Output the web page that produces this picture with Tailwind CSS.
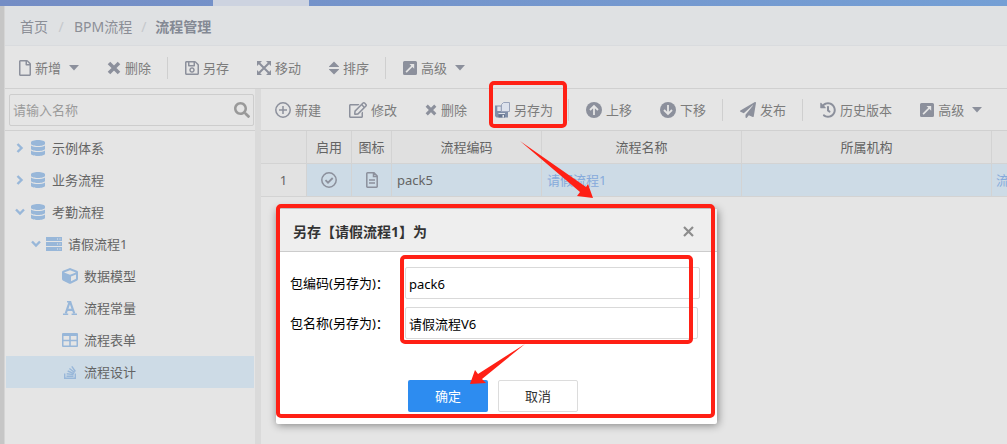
<!DOCTYPE html>
<html lang="zh-CN">
<head>
<meta charset="utf-8">
<title>流程管理</title>
<script src="https://cdn.jsdelivr.net/npm/@tailwindcss/browser@4"></script>
</head>
<body class="relative flex min-h-screen flex-col overflow-hidden bg-[#e5e5e5] font-['Noto_Sans','Noto_Sans_CJK_SC',sans-serif] text-[13px] leading-5 text-[#7c7c7c]">

<svg class="hidden" aria-hidden="true">
  <symbol id="times" viewBox="0 0 14 14"><path d="M2 2l10 10M12 2L2 12" stroke="currentColor" stroke-width="3.600" fill="none"/></symbol>
  <symbol id="advanced" viewBox="0 0 14 14"><path fill-rule="evenodd" fill="currentColor" d="M1.500 0h11A1.500 1.500 0 0 1 14 1.500v11a1.500 1.500 0 0 1-1.500 1.500h-11A1.500 1.500 0 0 1 0 12.500v-11A1.500 1.500 0 0 1 1.500 0zM6.500 3l1.800 1.800-5.800 5.700 1.200 1.200 5.700-5.800L11.200 7.700V3z"/></symbol>
  <symbol id="caret" viewBox="0 0 10 6"><path d="M0 0h10L5 5.500z" fill="currentColor"/></symbol>
  <symbol id="database" viewBox="0 0 448 512"><path fill="currentColor" d="M448 73.143v45.714C448 159.143 347.667 192 224 192S0 159.143 0 118.857V73.143C0 32.857 100.333 0 224 0s224 32.857 224 73.143zM448 176v102.857C448 319.143 347.667 352 224 352S0 319.143 0 278.857V176c48.125 33.143 136.208 48.572 224 48.572S399.874 209.143 448 176zm0 160v102.857C448 479.143 347.667 512 224 512S0 479.143 0 438.857V336c48.125 33.143 136.208 48.572 224 48.572S399.874 369.143 448 336z"/></symbol>
  <symbol id="right" viewBox="0 0 8 10"><path d="M1.500 1L5.500 5l-4 4" stroke="currentColor" stroke-width="2.400" fill="none"/></symbol>
  <symbol id="down" viewBox="0 0 10 8"><path d="M1 1.500L5 5.500l4-4" stroke="currentColor" stroke-width="2.400" fill="none"/></symbol>
</svg>

<div class="flex h-[6px] shrink-0 bg-linear-to-r from-[#748dc5] to-[#749fd5]"><div class="ml-[213px] w-24 bg-[#cdd3e0]"></div></div>

<div class="flex grow border-l-4 border-[#c6c6c6]">
<div class="flex min-w-0 grow flex-col border-l border-[#d5d5d5]">

<nav class="flex h-10 shrink-0 items-center border-b border-[#d9dbde] bg-[#dfe1e3] pt-[2px] pl-[15px] text-sm text-[#8b8e96]" aria-label="导航">
  <a href="#">首页</a><span class="w-[26px] text-center text-[#c5c8cc]">/</span><a href="#">BPM流程</a><span class="w-[23px] text-center text-[#c5c8cc]">/</span><a href="#" class="font-bold text-[#848994]">流程管理</a>
</nav>

<div class="flex h-[43px] shrink-0 items-center border-b border-[#d0d0d0] pt-px [&_svg]:shrink-0 [&_svg]:text-[#8c909c] [&_button]:flex [&_button]:items-center [&_button]:gap-1 [&_button]:px-[14px] [&_button]:whitespace-nowrap">
  <button type="button"><svg class="h-4 w-3" viewBox="0 0 384 512"><path fill="currentColor" d="M369.900 97.900L286 14C277 5 264.800-.1 252.100-.1H48C21.500 0 0 21.500 0 48v416c0 26.500 21.500 48 48 48h288c26.500 0 48-21.500 48-48V131.900c0-12.700-5.100-25-14.100-34zM332.100 128H256V51.900l76.100 76.100zM48 464V48h160v104c0 13.300 10.700 24 24 24h104v288H48z"/></svg>新增<svg class="ml-1 h-[6px] w-[10px]"><use href="#caret"/></svg></button>
  <button type="button"><svg class="size-[14px]"><use href="#times"/></svg>删除</button>
  <i class="mr-[3px] ml-[2px] h-[22px] w-px bg-[#cfcfcf]"></i>
  <button type="button"><svg class="h-4 w-[14px]" viewBox="0 0 448 512"><path fill="currentColor" d="M433.941 129.941l-83.882-83.882A48 48 0 0 0 316.118 32H48C21.490 32 0 53.490 0 80v352c0 26.510 21.490 48 48 48h352c26.510 0 48-21.490 48-48V163.882a48 48 0 0 0-14.059-33.941zM272 80v80H144V80h128zm122 352H54a6 6 0 0 1-6-6V86a6 6 0 0 1 6-6h42v104c0 13.255 10.745 24 24 24h176c13.255 0 24-10.745 24-24V83.882l78.243 78.243a6 6 0 0 1 1.757 4.243V426a6 6 0 0 1-6 6zM224 232c-48.523 0-88 39.477-88 88s39.477 88 88 88 88-39.477 88-88-39.477-88-88-88zm0 128c-22.056 0-40-17.944-40-40s17.944-40 40-40 40 17.944 40 40-17.944 40-40 40z"/></svg>另存</button>
  <button type="button"><svg class="size-[14px]" viewBox="0 0 14 14"><path d="M2 2l10 10M12 2L2 12" stroke="currentColor" stroke-width="2"/><path fill="currentColor" d="M0 0h5L0 5zM14 0v5L9 0zM0 14V9l5 5zM14 14H9l5-5z"/></svg>移动</button>
  <button type="button"><svg class="h-[14px] w-[10px]" viewBox="0 0 10 14"><path fill="currentColor" d="M0 5.500L5 .5l5 5V6H0zM0 8h10v.5l-5 5-5-5z"/></svg>排序</button>
  <i class="mr-[3px] ml-[2px] h-[22px] w-px bg-[#cfcfcf]"></i>
  <button type="button"><svg class="size-[14px]"><use href="#advanced"/></svg>高级<svg class="ml-1 h-[6px] w-[10px]"><use href="#caret"/></svg></button>
</div>

<div class="flex min-h-0 grow">
<aside class="flex w-[250px] shrink-0 flex-col">
  <div class="border-b border-[#d0d0d0] pt-[5px] pr-px pb-[4px] pl-1">
    <div class="flex h-8 items-center rounded-xs border border-[#cdcdcd] pr-[3px] pl-[3px]">
      <input type="search" aria-label="请输入名称" placeholder="请输入名称" class="min-w-0 grow bg-transparent outline-none placeholder:text-[#9b9b9b]">
      <button type="button" aria-label="搜索"><svg class="size-4 text-[#999]" viewBox="0 0 512 512"><path fill="currentColor" d="M505 442.700L405.300 343c-4.500-4.500-10.600-7-17-7H372c27.600-35.300 44-79.700 44-128C416 93.100 322.900 0 208 0S0 93.100 0 208s93.100 208 208 208c48.300 0 92.700-16.400 128-44v16.300c0 6.400 2.500 12.500 7 17l99.700 99.700c9.400 9.400 24.600 9.400 33.900 0l28.300-28.300c9.400-9.400 9.400-24.600.1-34zM208 336c-70.700 0-128-57.200-128-128 0-70.700 57.200-128 128-128 70.700 0 128 57.200 128 128 0 70.700-57.200 128-128 128z"/></svg></button>
    </div>
  </div>
  <ul class="pt-px pr-px pl-px text-[#646464] [&_svg]:shrink-0 [&_svg]:text-[#98b7d9] [&>li]:flex [&>li]:h-8 [&>li]:items-center">
    <li class="pl-[10px]"><svg class="mr-[7px] h-[10px] w-2"><use href="#right"/></svg><svg class="mr-[7px] h-4 w-[14px]"><use href="#database"/></svg>示例体系</li>
    <li class="pl-[10px]"><svg class="mr-[7px] h-[10px] w-2"><use href="#right"/></svg><svg class="mr-[7px] h-4 w-[14px]"><use href="#database"/></svg>业务流程</li>
    <li class="pl-[9px]"><svg class="mr-[6px] h-2 w-[10px]"><use href="#down"/></svg><svg class="mr-[7px] h-4 w-[14px]"><use href="#database"/></svg>考勤流程</li>
    <li class="pl-[25px]"><svg class="mr-[5px] h-2 w-[10px]"><use href="#down"/></svg><svg class="mr-[6px] h-[14px] w-4" viewBox="0 0 16 14"><path fill="currentColor" fill-rule="evenodd" d="M0 0h16v4H0zM0 5h16v4H0zM0 10h16v4H0zM11 1.500h1v1h-1zM13.500 1.500h1v1h-1zM11 6.500h1v1h-1zM13.500 6.500h1v1h-1zM11 11.500h1v1h-1zM13.500 11.500h1v1h-1z"/></svg>请假流程1</li>
    <li class="pl-14"><svg class="mr-[6px] size-4" viewBox="0 0 512 512"><path fill="currentColor" d="M239.100 6.300l-208 78c-18.700 7-31.100 25-31.100 45v225.100c0 18.200 10.300 34.800 26.500 42.900l208 104c13.500 6.800 29.400 6.800 42.900 0l208-104c16.300-8.100 26.500-24.800 26.500-42.900V129.300c0-20-12.400-37.900-31.100-44.900l-208-78C262 2.200 250 2.200 239.100 6.300zM256 68.400l192 72v1.100l-192 78-192-78v-1.100l192-72zm32 356V275.500l160-65v133.900l-160 80z"/></svg>数据模型</li>
    <li class="pl-14"><svg class="mr-[6px] size-4" viewBox="0 0 16 16"><path d="M3.700 13.500L7.600 2M8.200 2l4.100 11.500M5 9.800h6" stroke="currentColor" stroke-width="2.200" fill="none"/><path d="M1 14.200h5.200M9.600 14.200H15M5 1.700h4.200" stroke="currentColor" stroke-width="1.600"/></svg>流程常量</li>
    <li class="pl-14"><svg class="mr-[6px] size-4" viewBox="0 0 16 16"><path fill="currentColor" fill-rule="evenodd" d="M1 1h14a1 1 0 0 1 1 1v12a1 1 0 0 1-1 1H1a1 1 0 0 1-1-1V2a1 1 0 0 1 1-1zM1.500 4v3.800h5.700V4zM8.800 4v3.800h5.700V4zM1.500 9.300v4.200h5.700V9.300zM8.800 9.300v4.200h5.700V9.300z"/></svg>流程表单</li>
    <li class="bg-[#cddbe6] pl-14"><svg class="mr-[6px] size-4" viewBox="0 0 16 16"><g stroke="currentColor" fill="none" stroke-width="1.400"><path d="M2.700 9.500v4.800h10.600V9.500"/><path d="M4.500 12.200h7M4.700 9.700l6.900.9M5.700 7l6.300 2.600M7.400 4.500l5.200 4M9.800 2.300l3.600 5.200"/></g></svg>流程设计</li>
  </ul>
</aside>
<div class="w-[6px] shrink-0 bg-[#dadada]"></div>

<main class="min-w-0 grow overflow-hidden">
  <div class="flex h-[42px] items-center border-b border-[#d0d0d0] [&_svg]:shrink-0 [&_svg]:text-[#8c909c] [&_button]:flex [&_button]:items-center [&_button]:gap-1 [&_button]:px-[14px] [&_button]:whitespace-nowrap">
    <button type="button"><svg class="size-4" viewBox="0 0 16 16"><circle cx="8" cy="8" r="7.200" fill="none" stroke="currentColor" stroke-width="1.500"/><path d="M8 4v8M4 8h8" stroke="currentColor" stroke-width="1.500"/></svg>新建</button>
    <button type="button"><svg class="h-4 w-[18px]" viewBox="0 0 576 512"><path fill="currentColor" d="M402.300 344.900l32-32c5-5 13.700-1.500 13.700 5.700V464c0 26.500-21.500 48-48 48H48c-26.500 0-48-21.500-48-48V112c0-26.500 21.500-48 48-48h273.500c7.100 0 10.700 8.600 5.700 13.700l-32 32c-1.500 1.500-3.500 2.300-5.700 2.300H48v352h352V350.500c0-2.100.8-4.100 2.300-5.600zm156.600-201.800L296.300 405.700l-90.400 10c-26.200 2.900-48.500-19.200-45.600-45.600l10-90.400L432.900 17.100c22.900-22.900 59.900-22.900 82.700 0l43.200 43.200c22.900 22.900 22.900 60 .1 82.800zM460.100 174L402 115.900 216.200 301.800l-7.300 65.300 65.300-7.300L460.100 174zm64.800-79.700l-43.200-43.200c-4.100-4.100-10.800-4.100-14.800 0L436 82l58.100 58.100 30.900-30.900c4-4.200 4-10.800-.1-14.900z"/></svg>修改</button>
    <button type="button"><svg class="size-3"><use href="#times"/></svg>删除</button>
    <button type="button"><svg class="h-4 w-[15px]" viewBox="0 0 15 16"><path fill="#7f8ea8" d="M0 3.500h13V15.500H1.500L0 14z"/><path fill="#dfe3ea" d="M2.300 4.500h3.500v4.500H2.300zM3.500 11h6.500v1H3.500z"/><path fill="#66758f" d="M3.500 12.500h6.500v3H3.500z"/><path fill="#dfe3ea" d="M7.500 13h1.500v2.500H7.500z"/><path fill="#dde2ec" stroke="#9aa4ba" d="M6.500 2.500l2-2h6v9h-8z"/></svg>另存为</button>
    <i class="mr-[3px] ml-px h-[22px] w-px bg-[#cfcfcf]"></i>
    <button type="button"><svg class="size-4" viewBox="0 0 16 16"><circle cx="8" cy="8" r="8" fill="currentColor"/><path d="M8 13V4M4 8l4-4 4 4" fill="none" stroke="#e5e5e5" stroke-width="1.800"/></svg>上移</button>
    <button type="button"><svg class="size-4" viewBox="0 0 16 16"><circle cx="8" cy="8" r="8" fill="currentColor"/><path d="M8 3v9M4 8l4 4 4-4" fill="none" stroke="#e5e5e5" stroke-width="1.800"/></svg>下移</button>
    <i class="mr-[3px] ml-[2px] h-[22px] w-px bg-[#cfcfcf]"></i>
    <button type="button"><svg class="size-4" viewBox="0 0 512 512"><path fill="currentColor" d="M476 3.200L12.500 270.600c-18.100 10.400-15.800 35.600 2.200 43.200L121 358.400l287.300-253.200c5.500-4.900 13.300 2.600 8.600 8.300L176 407v80.500c0 23.600 28.500 32.900 42.500 15.800L282 426l124.600 52.200c14.200 6 30.400-2.900 33-18.200l72-432C515 7.800 493.300-6.800 476 3.200z"/></svg>发布</button>
    <i class="mr-[3px] ml-[2px] h-[22px] w-px bg-[#cfcfcf]"></i>
    <button type="button"><svg class="size-4" viewBox="0 0 512 512"><path fill="currentColor" d="M504 255.531c.253 136.640-111.180 248.372-247.820 248.468-59.015.042-113.223-20.530-155.822-54.911-11.077-8.940-11.905-25.541-1.839-35.607l11.267-11.267c8.609-8.609 22.353-9.551 31.891-1.984C173.062 425.135 212.781 440 256 440c101.705 0 184-82.311 184-184 0-101.705-82.311-184-184-184-48.814 0-93.149 18.969-126.068 49.932l50.754 50.754c10.080 10.080 2.941 27.314-11.313 27.314H24c-8.837 0-16-7.163-16-16V38.627c0-14.254 17.234-21.393 27.314-11.314l49.372 49.372C129.209 34.136 189.552 8 256 8c136.810 0 247.747 110.780 248 247.531zm-180.912 78.784l9.823-12.630c8.138-10.463 6.253-25.542-4.210-33.679L288 256.349V152c0-13.255-10.745-24-24-24h-16c-13.255 0-24 10.745-24 24v135.651l65.409 50.874c10.463 8.137 25.541 6.253 33.679-4.210z"/></svg>历史版本</button>
    <button type="button"><svg class="size-[14px]"><use href="#advanced"/></svg>高级<svg class="ml-1 h-[6px] w-[10px]"><use href="#caret"/></svg></button>
  </div>
  <table class="w-[880px] table-fixed border-separate border-spacing-0 text-[#646464] [&_td]:h-[33px] [&_td]:border-r [&_td]:border-b [&_td]:border-[#d3d3d3] [&_td]:p-0 [&_th]:h-[33px] [&_th]:border-r [&_th]:border-b [&_th]:border-[#d3d3d3] [&_th]:bg-[#e0e0e0] [&_th]:p-0 [&_th]:font-normal">
    <colgroup><col class="w-[46px]"><col class="w-[45px]"><col class="w-10"><col class="w-[150px]"><col class="w-[200px]"><col class="w-[250px]"><col></colgroup>
    <thead><tr><th></th><th>启用</th><th>图标</th><th>流程编码</th><th>流程名称</th><th>所属机构</th><th></th></tr></thead>
    <tbody><tr class="bg-[#cddbe6]">
      <td class="bg-[#e2e2e2] text-center">1</td>
      <td><svg class="mx-auto size-4 text-[#8c909c]" viewBox="0 0 16 16" fill="none" stroke="currentColor" stroke-width="1.500"><circle cx="8" cy="8" r="7.200"/><path d="M4.500 8.200l2.500 2.500 4.700-4.700" stroke-width="1.800"/></svg></td>
      <td><svg class="mx-auto h-4 w-3 text-[#8c909c]" viewBox="0 0 12 16" fill="none" stroke="currentColor" stroke-width="1.500"><path d="M.8 1.500a.7.7 0 0 1 .7-.7H8L11.200 4v10.500a.7.7 0 0 1-.7.700h-9a.7.7 0 0 1-.7-.7zM7.500.8v3.700h3.700M3 8h6M3 11h6"/></svg></td>
      <td><span class="pl-[5px]">pack5</span></td>
      <td><a href="#" class="pl-[5px] text-[#86aadb]">请假流程1</a></td>
      <td></td>
      <td><a href="#" class="pl-1 text-[#86aadb]">流程</a></td>
    </tr></tbody>
  </table>
</main>
</div>
</div>
</div>

<section role="dialog" aria-labelledby="dlg" class="absolute top-[209px] left-[276px] w-[441px] rounded-xs bg-white text-black shadow-[1px_1px_8px_rgba(0,0,0,0.45)]">
  <header class="flex h-[43px] items-center justify-between border-b border-[#ccc] bg-[#eee] pt-[3px] pr-[23px] pl-[17px]">
    <h2 id="dlg" class="text-sm font-bold text-[#333]">另存【请假流程1】为</h2>
    <button type="button" aria-label="关闭"><svg class="size-[11px] text-[#8c8c8c]" viewBox="0 0 11 11"><path d="M1 1l9 9M10 1l-9 9" stroke="currentColor" stroke-width="2.200"/></svg></button>
  </header>
  <form class="px-[14px] pt-[15px] pb-3">
    <div class="mb-2 flex items-center"><label for="code" class="w-[115px]">包编码(另存为)：</label><input id="code" value="pack6" class="h-8 w-[295px] rounded-xs border border-[#d9d9d9] px-[3px] pt-[2px] outline-none"></div>
    <div class="flex items-center"><label for="name" class="w-[115px]">包名称(另存为)：</label><input id="name" value="请假流程V6" class="h-8 w-[293px] rounded-xs border border-[#d9d9d9] px-[3px] outline-none"></div>
    <div class="mt-[41px] flex gap-[10px] pl-[118px]">
      <button type="button" class="h-8 w-20 rounded-xs bg-[#2d8cf0] text-white">确定</button>
      <button type="button" class="h-8 w-20 rounded-xs border border-[#dcdcdc] text-[#333]">取消</button>
    </div>
  </form>
</section>

<svg class="pointer-events-none absolute top-0 left-0 h-[444px] w-[1007px]" viewBox="0 0 1007 444" aria-hidden="true">
  <g fill="none" stroke="#ff2015" stroke-width="4">
    <rect x="491" y="83" width="74" height="43" rx="3"/>
    <rect x="278" y="206" width="435" height="210" rx="3"/>
    <rect x="402" y="257" width="289" height="85" rx="3"/>
  </g>
  <g fill="#ff2015">
    <path d="M520 141L586 187 588 184 593 198 577 196 580 192z"/>
    <path d="M525 344L482 379 486 383 470 384 475 370 478 374z"/>
  </g>
</svg>
</body>
</html>
